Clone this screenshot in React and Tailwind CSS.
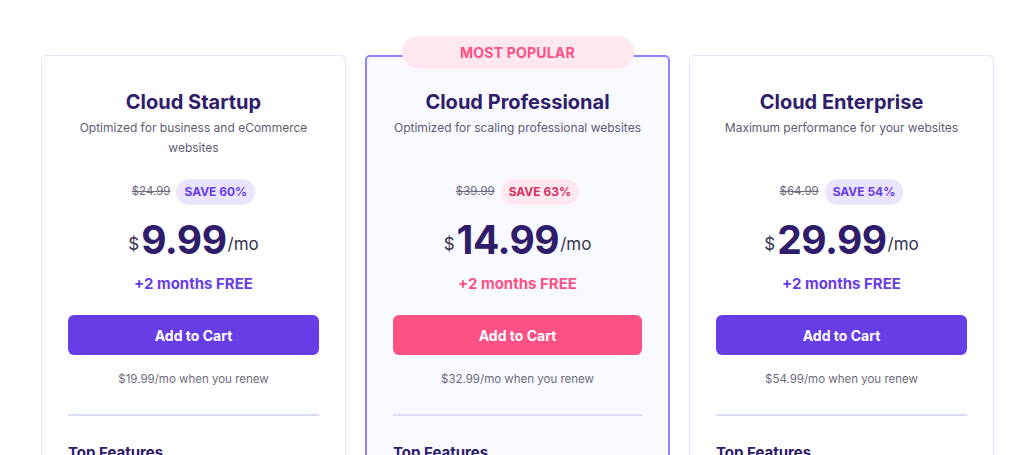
const plans = [
  {
    name: 'Cloud Startup',
    desc: 'Optimized for business and eCommerce websites',
    descW: 'w-[240px]',
    old: '$24.99',
    save: 'SAVE 60%',
    price: '9.99',
    renew: '$19.99/mo when you renew',
  },
  {
    name: 'Cloud Professional',
    desc: 'Optimized for scaling professional websites',
    descW: 'w-[260px]',
    old: '$39.99',
    save: 'SAVE 63%',
    price: '14.99',
    renew: '$32.99/mo when you renew',
    popular: true,
  },
  {
    name: 'Cloud Enterprise',
    desc: 'Maximum performance for your websites',
    descW: 'w-[260px]',
    old: '$64.99',
    save: 'SAVE 54%',
    price: '29.99',
    renew: '$54.99/mo when you renew',
  },
];

function PlanCard({ plan }) {
  const hot = plan.popular;
  return (
    <div
      className={`relative w-[305px] h-[420px] rounded-[5px] px-[26px] flex flex-col items-center ${
        hot ? 'pt-[32px] border-2 border-[#8c85ff] bg-[#f9faff]' : 'pt-[33px] border border-[#e6e6ff] bg-white'
      }`}
    >
      {hot && (
        <div className="absolute -top-[21px] left-1/2 -translate-x-1/2 w-[232px] h-[33px] rounded-full bg-[#ffe8ef] flex items-center justify-center text-[14px] font-bold tracking-[0.2px] text-[#fc5185]">
          MOST POPULAR
        </div>
      )}
      <h3 className="text-[20px] leading-[26px] font-bold text-[#2f1c6a]">{plan.name}</h3>
      <p className={`mt-[3px] ${plan.descW} text-center text-[12px] leading-[20px] text-[#5e5b73]`}>{plan.desc}</p>
      <div className={`flex items-center gap-[6px] ${plan.desc.length > 44 ? 'mt-[21px]' : 'mt-[41px]'}`}>
        <span className="text-[11.5px] text-[#6d6b7d] line-through">{plan.old}</span>
        <span
          className={`h-[26px] px-[8px] rounded-full flex items-center text-[12px] font-bold ${
            hot ? 'bg-[#ffe8ef] text-[#d63163]' : 'bg-[#ebe4ff] text-[#673de6]'
          }`}
        >
          {plan.save}
        </span>
      </div>
      <div className="mt-[10px] flex items-end text-[#2f1c6a] h-[46px]">
        <span className="text-[17px] leading-none mb-[8px] mr-[2px] text-[#36344d]">$</span>
        <span className="text-[39px] leading-none font-bold tracking-[-0.5px] mb-[2px]">{plan.price}</span>
        <span className="text-[17px] leading-none mb-[8px] ml-[1px] text-[#36344d]">/mo</span>
      </div>
      <div className={`mt-[13px] text-[15px] leading-[20px] font-bold ${hot ? 'text-[#fc5185]' : 'text-[#673de6]'}`}>
        +2 months FREE
      </div>
      <button
        className={`mt-[21px] w-full h-[40px] rounded-[6px] text-white text-[14px] font-bold ${
          hot ? 'bg-[#fc5185]' : 'bg-[#673de6]'
        }`}
      >
        Add to Cart
      </button>
      <div className="mt-[16px] text-[11.5px] leading-[16px] text-[#6d6b7d]">{plan.renew}</div>
      <div className="mt-[27px] w-full h-[2px] bg-[#dadff5]" />
      <div className="mt-[26px] w-full text-left text-[15px] font-bold text-[#2f1c6a]">Top Features</div>
    </div>
  );
}

export default function App() {
  return (
    <div className="w-[1024px] h-[455px] overflow-hidden bg-white font-['Inter',sans-serif]">
      <div className="flex items-start gap-[19px] pl-[41px] pt-[55px]">
        {plans.map((p) => (
          <PlanCard key={p.name} plan={p} />
        ))}
      </div>
    </div>
  );
}
